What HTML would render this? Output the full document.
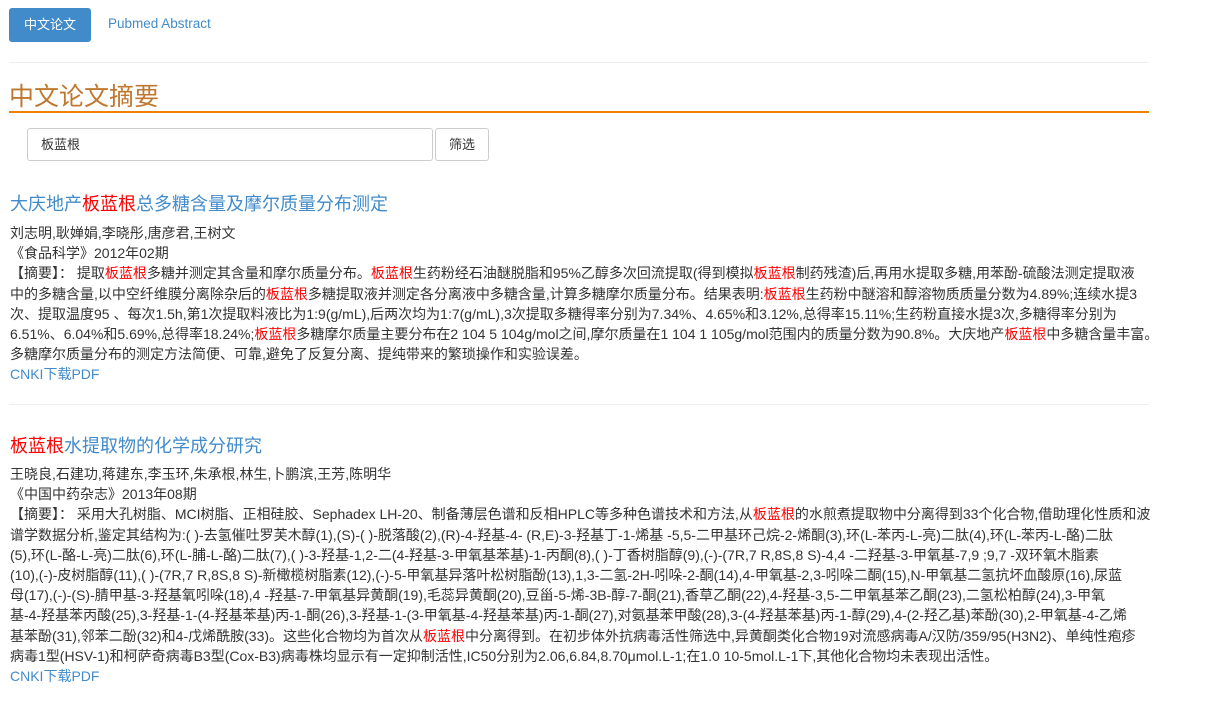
<!DOCTYPE html>
<html><head><meta charset="utf-8"><style>
body{margin:0;width:1217px;height:702px;background:#fff;font-family:"Liberation Sans","Noto Sans CJK SC",sans-serif;color:#333;font-size:14px;position:relative;overflow:hidden}
.a{position:absolute;left:10px;white-space:nowrap}
.r{color:#f00}
.btn{position:absolute;left:9px;top:8px;width:82px;height:34px;background:#428bca;border-radius:3px;color:#fff;font-size:13px;line-height:34px;text-align:center}
.t{font-size:18px;color:#428bca;line-height:24px}
.b{line-height:20.2px}
.lk{color:#428bca}
</style></head><body>
<div class="btn">中文论文</div>
<div class="a lk" style="left:108px;top:16px;font-size:13.5px">Pubmed Abstract</div>
<div style="position:absolute;left:9px;top:62px;width:1140px;height:1px;background:#eee"></div>
<div class="a" style="left:9px;top:80px;font-size:25px;color:#c07830;line-height:34px">中文论文摘要</div>
<div style="position:absolute;left:9px;top:111px;width:1140px;height:2px;background:#f08000"></div>
<div style="position:absolute;left:27px;top:128px;height:31px;border:1px solid #ccc;border-radius:3px;font-size:13px;line-height:31px;padding-left:13px;width:391px">板蓝根</div>
<div style="position:absolute;left:435px;top:128px;width:52px;height:31px;border:1px solid #ccc;border-radius:3px;font-size:13px;line-height:31px;text-align:center">筛选</div>

<div class="a t" style="top:192px">大庆地产<span class="r">板蓝根</span>总多糖含量及摩尔质量分布测定</div>
<div class="a b" style="top:223px">刘志明,耿婵娟,李晓彤,唐彦君,王树文<br>《食品科学》2012年02期<br>【摘要】： 提取<span class="r">板蓝根</span>多糖并测定其含量和摩尔质量分布。<span class="r">板蓝根</span>生药粉经石油醚脱脂和95%乙醇多次回流提取(得到模拟<span class="r">板蓝根</span>制药残渣)后,再用水提取多糖,用苯酚-硫酸法测定提取液<br>中的多糖含量,以中空纤维膜分离除杂后的<span class="r">板蓝根</span>多糖提取液并测定各分离液中多糖含量,计算多糖摩尔质量分布。结果表明:<span class="r">板蓝根</span>生药粉中醚溶和醇溶物质质量分数为4.89%;连续水提3<br>次、提取温度95 、每次1.5h,第1次提取料液比为1:9(g/mL),后两次均为1:7(g/mL),3次提取多糖得率分别为7.34%、4.65%和3.12%,总得率15.11%;生药粉直接水提3次,多糖得率分别为<br>6.51%、6.04%和5.69%,总得率18.24%;<span class="r">板蓝根</span>多糖摩尔质量主要分布在2 104 5 104g/mol之间,摩尔质量在1 104 1 105g/mol范围内的质量分数为90.8%。大庆地产<span class="r">板蓝根</span>中多糖含量丰富。<br>多糖摩尔质量分布的测定方法简便、可靠,避免了反复分离、提纯带来的繁琐操作和实验误差。<br><span class="lk">CNKI下载PDF</span></div>
<div style="position:absolute;left:9px;top:404px;width:1140px;height:1px;background:#eee"></div>

<div class="a t" style="top:434px"><span class="r">板蓝根</span>水提取物的化学成分研究</div>
<div class="a b" style="top:464px">王晓良,石建功,蒋建东,李玉环,朱承根,林生,卜鹏滨,王芳,陈明华<br>《中国中药杂志》2013年08期<br>【摘要】： 采用大孔树脂、MCI树脂、正相硅胶、Sephadex LH-20、制备薄层色谱和反相HPLC等多种色谱技术和方法,从<span class="r">板蓝根</span>的水煎煮提取物中分离得到33个化合物,借助理化性质和波<br>谱学数据分析,鉴定其结构为:( )-去氢催吐罗芙木醇(1),(S)-( )-脱落酸(2),(R)-4-羟基-4- (R,E)-3-羟基丁-1-烯基 -5,5-二甲基环己烷-2-烯酮(3),环(L-苯丙-L-亮)二肽(4),环(L-苯丙-L-酪)二肽<br>(5),环(L-酪-L-亮)二肽(6),环(L-脯-L-酪)二肽(7),( )-3-羟基-1,2-二(4-羟基-3-甲氧基苯基)-1-丙酮(8),( )-丁香树脂醇(9),(-)-(7R,7 R,8S,8 S)-4,4 -二羟基-3-甲氧基-7,9 ;9,7 -双环氧木脂素<br>(10),(-)-皮树脂醇(11),( )-(7R,7 R,8S,8 S)-新橄榄树脂素(12),(-)-5-甲氧基异落叶松树脂酚(13),1,3-二氢-2H-吲哚-2-酮(14),4-甲氧基-2,3-吲哚二酮(15),N-甲氧基二氢抗坏血酸原(16),尿蓝<br>母(17),(-)-(S)-腈甲基-3-羟基氧吲哚(18),4 -羟基-7-甲氧基异黄酮(19),毛蕊异黄酮(20),豆甾-5-烯-3B-醇-7-酮(21),香草乙酮(22),4-羟基-3,5-二甲氧基苯乙酮(23),二氢松柏醇(24),3-甲氧<br>基-4-羟基苯丙酸(25),3-羟基-1-(4-羟基苯基)丙-1-酮(26),3-羟基-1-(3-甲氧基-4-羟基苯基)丙-1-酮(27),对氨基苯甲酸(28),3-(4-羟基苯基)丙-1-醇(29),4-(2-羟乙基)苯酚(30),2-甲氧基-4-乙烯<br>基苯酚(31),邻苯二酚(32)和4-戊烯酰胺(33)。这些化合物均为首次从<span class="r">板蓝根</span>中分离得到。在初步体外抗病毒活性筛选中,异黄酮类化合物19对流感病毒A/汉防/359/95(H3N2)、单纯性疱疹<br>病毒1型(HSV-1)和柯萨奇病毒B3型(Cox-B3)病毒株均显示有一定抑制活性,IC50分别为2.06,6.84,8.70μmol.L-1;在1.0 10-5mol.L-1下,其他化合物均未表现出活性。<br><span class="lk">CNKI下载PDF</span></div>
</body></html>
